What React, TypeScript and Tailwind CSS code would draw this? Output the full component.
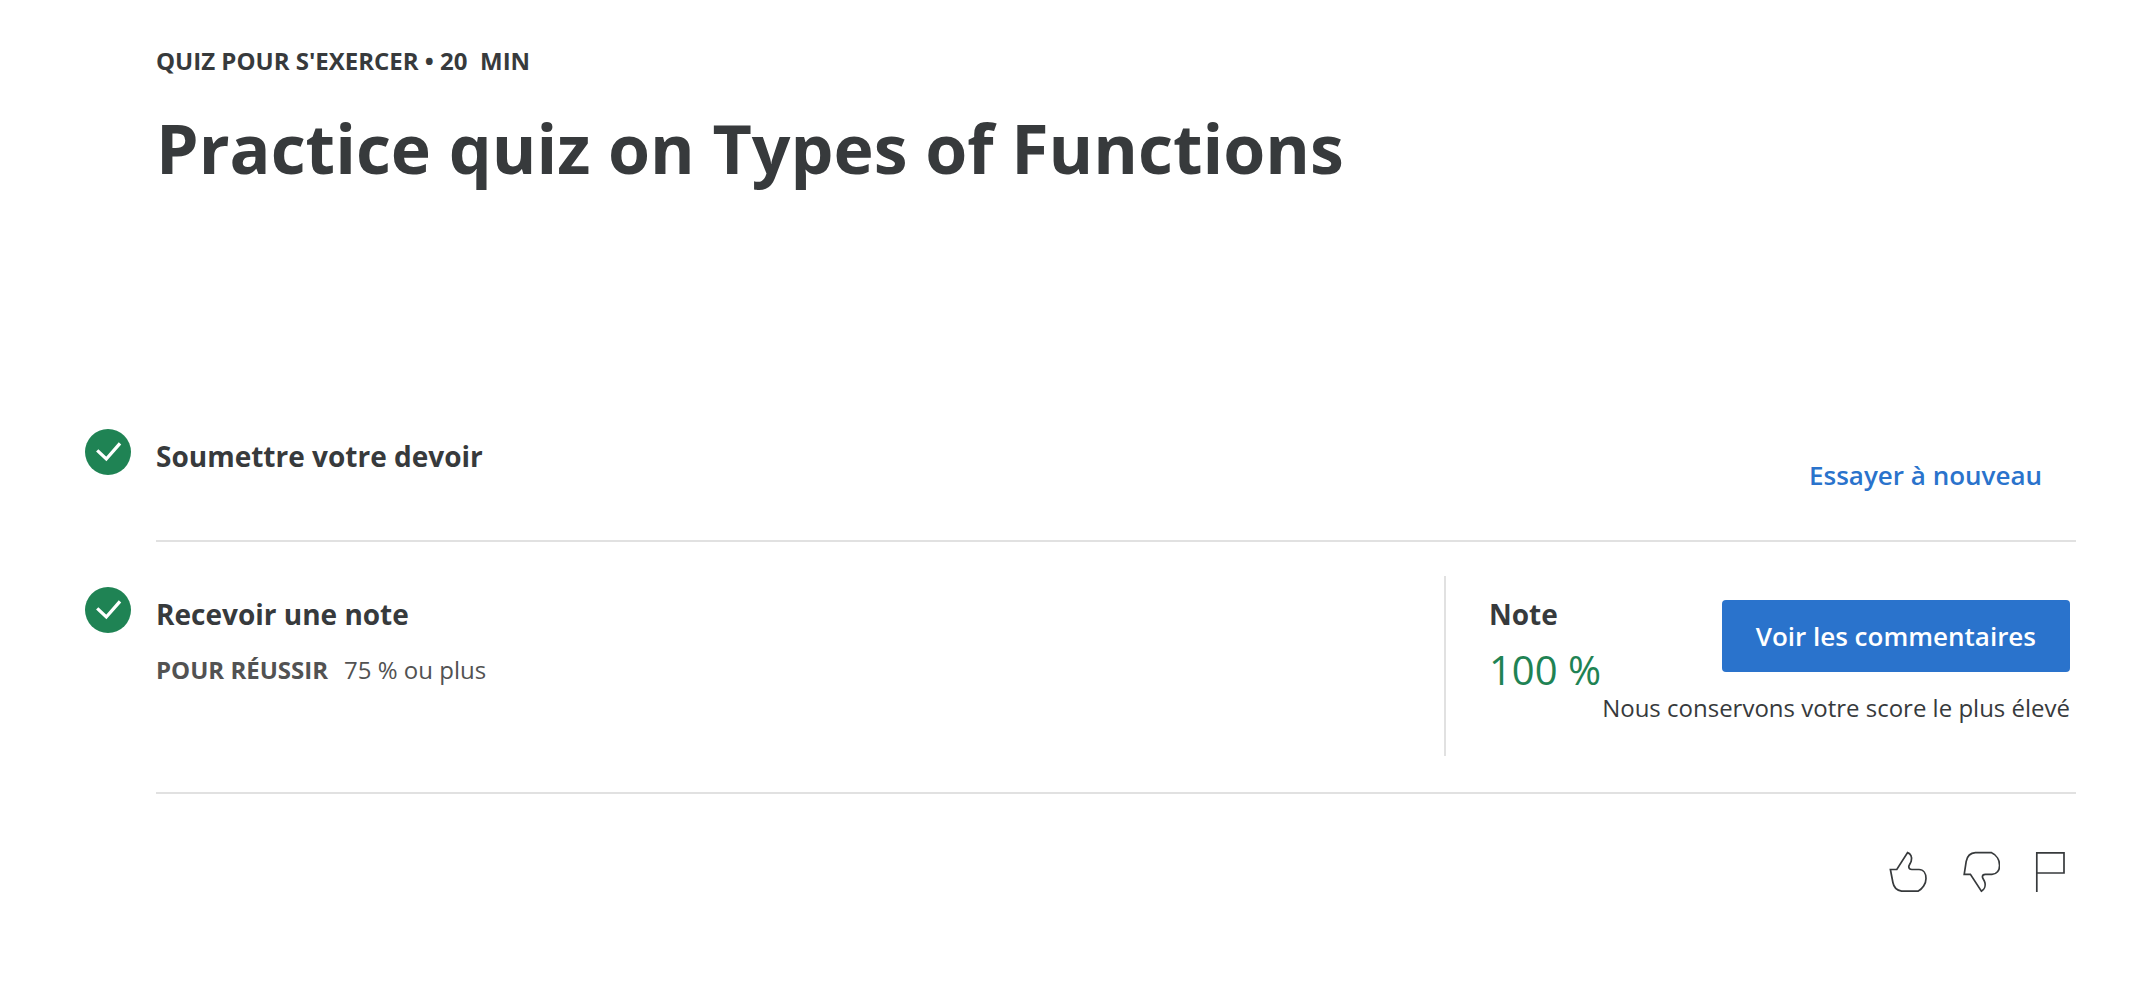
import type { ReactNode } from "react";

function CheckBadge() {
  return (
    <svg viewBox="0 0 46 46" className="h-[46px] w-[46px] shrink-0" aria-hidden="true">
      <circle cx="23" cy="23" r="23" fill="#1f8354" />
      <path d="M12.2 21.4L21.3 30L35 14.4" fill="none" stroke="#fff" strokeWidth="3.3" />
    </svg>
  );
}

function IconButton({ label, children }: { label: string; children: ReactNode }) {
  return (
    <button type="button" aria-label={label} className="block">
      <svg viewBox="0 0 38 42" className="h-[42px] w-[38px]" fill="none" stroke="#373a3c" strokeWidth="1.7">
        {children}
      </svg>
    </button>
  );
}

export default function App() {
  return (
    <main className="bg-white pt-[44px] pr-[76px] pb-[87px] pl-[85px] font-['Open_Sans',sans-serif] text-[#373a3c]">
      <header className="pl-[71px]">
        <p className="text-2xl leading-[34px] font-bold whitespace-pre">QUIZ POUR S'EXERCER • 20  MIN</p>
        <h1 className="mt-[22px] text-[68px] leading-[96px] font-bold">Practice quiz on Types of Functions</h1>
      </header>

      <section className="mt-[229px] flex gap-[25px]">
        <div className="pt-[4px]">
          <CheckBadge />
        </div>
        <div className="flex h-[117px] flex-1 justify-between border-b-2 border-[#e1e1e1]">
          <h2 className="pt-[11px] text-[28px] leading-[40px] font-bold">Soumettre votre devoir</h2>
          <button type="button" className="mt-[14px] mr-[6px] h-[72px] px-[28px] text-[26px] font-semibold text-[#2a73cc]">
            Essayer à nouveau
          </button>
        </div>
      </section>

      <section className="flex gap-[25px]">
        <div className="pt-[45px]">
          <CheckBadge />
        </div>
        <div className="flex flex-1 border-b-2 border-[#e1e1e1] pt-[34px] pb-[36px]">
          <div className="flex-1 pt-[18px]">
            <h2 className="text-[28px] leading-[40px] font-bold">Recevoir une note</h2>
            <p className="mt-[19px] flex gap-4 text-2xl leading-[34px] text-[#525252]">
              <strong className="font-bold">POUR RÉUSSIR</strong>
              <span>75 % ou plus</span>
            </p>
          </div>
          <div className="flex h-[180px] w-[632px] justify-between border-l-2 border-[#e1e1e1] pr-[6px] pl-[43px]">
            <div className="pt-[18px]">
              <h3 className="text-[28px] leading-[40px] font-bold">Note</h3>
              <p className="mt-[8px] text-[40px] leading-[56px] whitespace-nowrap text-[#1f8354]">100 %</p>
            </div>
            <div className="flex flex-col items-end pt-[24px]">
              <button type="button" className="h-[72px] rounded bg-[#2a73cc] px-[34px] text-[26px] font-semibold text-white">
                Voir les commentaires
              </button>
              <p className="mt-[19px] text-2xl leading-[34px] whitespace-nowrap">Nous conservons votre score le plus élevé</p>
            </div>
          </div>
        </div>
      </section>

      <footer className="mt-[57px] flex justify-end gap-[35px] pr-[3px]">
        <IconButton label="J'aime">
          <path d="M1.4 18.5H7.8L18.6 1.6C21.4 2.6 23.6 6 22.2 10.2C21.2 13 19.6 14.4 19.8 16.2C20 17.8 21 18.5 22.8 18.5H30C34.6 18.5 37 22.6 37 27.4C37 33 33.4 38 29 40.2H12.6C7.8 39.4 4.8 36.4 3.9 31.5Z" />
        </IconButton>
        <IconButton label="Je n'aime pas">
          <path d="M2.2 23.3L4.2 10.4C5.2 5.4 8.6 2 13.4 1.7H29.6C34.4 3.8 37.6 9 37.6 14.5C37.6 19.5 34.6 23.3 30 23.3H23.4C21.6 23.3 20.4 24.2 20.4 25.8C20.4 27.5 22 28.5 22.8 31.2C23.9 35.2 22 38.8 19.4 40.2L8.4 23.3Z" />
        </IconButton>
        <IconButton label="Signaler un problème">
          <path d="M1.8 41V1.8H29V22H1.8" />
        </IconButton>
      </footer>
    </main>
  );
}
